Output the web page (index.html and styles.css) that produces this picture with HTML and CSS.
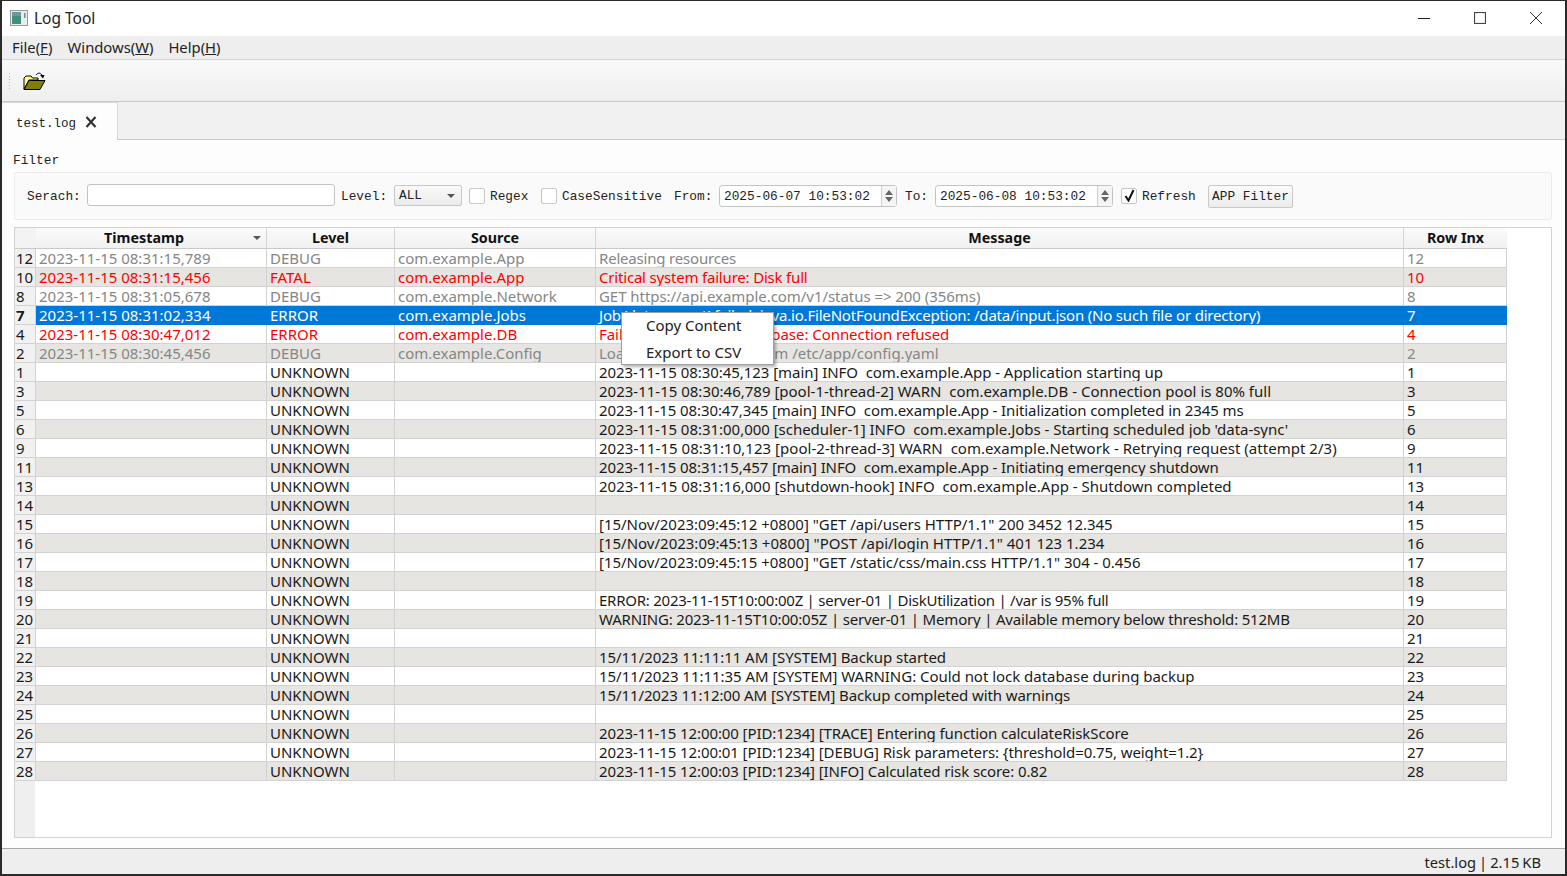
FILE: index.html
```html
<!DOCTYPE html>
<html lang="en">
<head>
<meta charset="utf-8">
<title>Log Tool</title>
<link rel="stylesheet" href="styles.css">
</head>
<body>
<div class="window">
  <header class="titlebar">
    <svg class="app-icon" width="18" height="16" viewBox="0 0 18 16"><rect x="0.5" y="0.5" width="17" height="15" fill="#e8ecec" stroke="#9a9a9a"/><rect x="2" y="2" width="9" height="12" fill="#3f8f80"/><rect x="2" y="2" width="9" height="4" fill="#6a9a9a"/><rect x="14" y="3" width="1.5" height="5" fill="#7a8a90"/></svg>
    <span class="title">Log Tool</span>
    <div class="winbtns">
      <svg width="12" height="12" viewBox="0 0 12 12"><path d="M0 6.500H12" stroke="#222" fill="none"/></svg>
      <svg width="12" height="12" viewBox="0 0 12 12"><rect x="0.500" y="0.500" width="11" height="11" stroke="#444" stroke-width="1.200" fill="none"/></svg>
      <svg width="12" height="12" viewBox="0 0 12 12"><path d="M0 0L12 12M12 0L0 12" stroke="#333" fill="none"/></svg>
    </div>
  </header>
  <nav class="menubar">
    <span>File(<u>F</u>)</span><span>Windows(<u>W</u>)</span><span>Help(<u>H</u>)</span>
  </nav>
  <div class="toolbar">
    <span class="grip"></span>
    <svg class="folder" width="23" height="19" viewBox="0 0 23 19">
      <path d="M1 17V6L3 4H8L9.500 6H15V8H6L1 17Z" fill="#ffff80" stroke="#000"/>
      <path d="M1 17.500L6 8.500H22L17 17.500Z" fill="#808000" stroke="#000"/>
      <path d="M13 3C15 0.500 17 0.500 19 3" fill="none" stroke="#000"/>
      <path d="M17 3H21.500L20 6.500Z" fill="#000"/>
    </svg>
  </div>
  <div class="tabbar">
    <div class="tab"><span>test.log</span>
      <svg width="12" height="12" viewBox="0 0 12 12"><path d="M1.500 1L10.500 11M10.500 1L1.500 11" stroke="#333" stroke-width="2.200" fill="none"/></svg>
    </div>
  </div>
  <main class="content">
    <div class="filter-label">Filter</div>
    <section class="filter">
      <label class="lbl w-serach">Serach:</label>
      <div class="input search"></div>
      <label class="lbl w-level">Level:</label>
      <div class="combo"><span>ALL</span><i class="caret"></i></div>
      <span class="check c-regex"></span><label class="lbl w-regex">Regex</label>
      <span class="check"></span><label class="lbl w-case">CaseSensitive</label>
      <label class="lbl w-from">From:</label>
      <div class="input date"><span>2025-06-07 10:53:02</span><div class="spin"><i class="up"></i><i class="down"></i></div></div>
      <label class="lbl w-to">To:</label>
      <div class="input date"><span>2025-06-08 10:53:02</span><div class="spin"><i class="up"></i><i class="down"></i></div></div>
      <span class="check checked"><svg width="11" height="13" viewBox="0 0 11 13"><path d="M1.500 7L4.500 11.500L9.500 1" fill="none" stroke="#111" stroke-width="2"/></svg></span><label class="lbl w-refresh">Refresh</label>
      <button class="apply">APP Filter</button>
    </section>
    <section class="table">
      <div class="thead">
        <div class="corner"></div>
        <div class="th sort">Timestamp<i class="caret"></i></div>
        <div class="th">Level</div>
        <div class="th">Source</div>
        <div class="th">Message</div>
        <div class="th">Row Inx</div>
      </div>
      <div class="tbody">
        <div class="row debug"><b>12</b><span>2023-11-15 08:31:15,789</span><span>DEBUG</span><span>com.example.App</span><span class="m1">Releasing resources</span><span>12</span></div>
        <div class="row alt error"><b>10</b><span>2023-11-15 08:31:15,456</span><span>FATAL</span><span>com.example.App</span><span class="m1">Critical system failure: Disk full</span><span>10</span></div>
        <div class="row debug"><b>8</b><span>2023-11-15 08:31:05,678</span><span>DEBUG</span><span>com.example.Network</span><span class="m3">GET https://api.example.com/v1/status =&gt; 200 (356ms)</span><span>8</span></div>
        <div class="row selected"><b>7</b><span>2023-11-15 08:31:02,334</span><span>ERROR</span><span>com.example.Jobs</span><span class="m1">Job 'data-export' failed: java.io.FileNotFoundException: /data/input.json (No such file or directory)</span><span>7</span></div>
        <div class="row error"><b>4</b><span>2023-11-15 08:30:47,012</span><span>ERROR</span><span>com.example.DB</span><span class="m3">Failed to connect to database: Connection refused</span><span>4</span></div>
        <div class="row alt debug"><b>2</b><span>2023-11-15 08:30:45,456</span><span>DEBUG</span><span>com.example.Config</span><span>Loaded configuration from /etc/app/config.yaml</span><span>2</span></div>
        <div class="row"><b>1</b><span></span><span>UNKNOWN</span><span></span><span class="m3">2023-11-15 08:30:45,123 [main] INFO&nbsp; com.example.App - Application starting up</span><span>1</span></div>
        <div class="row alt"><b>3</b><span></span><span>UNKNOWN</span><span></span><span>2023-11-15 08:30:46,789 [pool-1-thread-2] WARN&nbsp; com.example.DB - Connection pool is 80% full</span><span>3</span></div>
        <div class="row"><b>5</b><span></span><span>UNKNOWN</span><span></span><span class="m2">2023-11-15 08:30:47,345 [main] INFO&nbsp; com.example.App - Initialization completed in 2345 ms</span><span>5</span></div>
        <div class="row alt"><b>6</b><span></span><span>UNKNOWN</span><span></span><span class="m4">2023-11-15 08:31:00,000 [scheduler-1] INFO&nbsp; com.example.Jobs - Starting scheduled job 'data-sync'</span><span>6</span></div>
        <div class="row"><b>9</b><span></span><span>UNKNOWN</span><span></span><span class="p1">2023-11-15 08:31:10,123 [pool-2-thread-3] WARN&nbsp; com.example.Network - Retrying request (attempt 2/3)</span><span>9</span></div>
        <div class="row alt"><b>11</b><span></span><span>UNKNOWN</span><span></span><span class="m2">2023-11-15 08:31:15,457 [main] INFO&nbsp; com.example.App - Initiating emergency shutdown</span><span>11</span></div>
        <div class="row"><b>13</b><span></span><span>UNKNOWN</span><span></span><span>2023-11-15 08:31:16,000 [shutdown-hook] INFO&nbsp; com.example.App - Shutdown completed</span><span>13</span></div>
        <div class="row alt"><b>14</b><span></span><span>UNKNOWN</span><span></span><span></span><span>14</span></div>
        <div class="row"><b>15</b><span></span><span>UNKNOWN</span><span></span><span class="m4">[15/Nov/2023:09:45:12 +0800] "GET /api/users HTTP/1.1" 200 3452 12.345</span><span>15</span></div>
        <div class="row alt"><b>16</b><span></span><span>UNKNOWN</span><span></span><span>[15/Nov/2023:09:45:13 +0800] "POST /api/login HTTP/1.1" 401 123 1.234</span><span>16</span></div>
        <div class="row"><b>17</b><span></span><span>UNKNOWN</span><span></span><span class="m4">[15/Nov/2023:09:45:15 +0800] "GET /static/css/main.css HTTP/1.1" 304 - 0.456</span><span>17</span></div>
        <div class="row alt"><b>18</b><span></span><span>UNKNOWN</span><span></span><span></span><span>18</span></div>
        <div class="row"><b>19</b><span></span><span>UNKNOWN</span><span></span><span class="m5">ERROR: 2023-11-15T10:00:00Z | server-01 | DiskUtilization | /var is 95% full</span><span>19</span></div>
        <div class="row alt"><b>20</b><span></span><span>UNKNOWN</span><span></span><span class="m1">WARNING: 2023-11-15T10:00:05Z | server-01 | Memory | Available memory below threshold: 512MB</span><span>20</span></div>
        <div class="row"><b>21</b><span></span><span>UNKNOWN</span><span></span><span></span><span>21</span></div>
        <div class="row alt"><b>22</b><span></span><span>UNKNOWN</span><span></span><span class="m3">15/11/2023 11:11:11 AM [SYSTEM] Backup started</span><span>22</span></div>
        <div class="row"><b>23</b><span></span><span>UNKNOWN</span><span></span><span class="m4">15/11/2023 11:11:35 AM [SYSTEM] WARNING: Could not lock database during backup</span><span>23</span></div>
        <div class="row alt"><b>24</b><span></span><span>UNKNOWN</span><span></span><span class="m2">15/11/2023 11:12:00 AM [SYSTEM] Backup completed with warnings</span><span>24</span></div>
        <div class="row"><b>25</b><span></span><span>UNKNOWN</span><span></span><span></span><span>25</span></div>
        <div class="row alt"><b>26</b><span></span><span>UNKNOWN</span><span></span><span class="m2">2023-11-15 12:00:00 [PID:1234] [TRACE] Entering function calculateRiskScore</span><span>26</span></div>
        <div class="row"><b>27</b><span></span><span>UNKNOWN</span><span></span><span class="m2">2023-11-15 12:00:01 [PID:1234] [DEBUG] Risk parameters: {threshold=0.75, weight=1.2}</span><span>27</span></div>
        <div class="row alt"><b>28</b><span></span><span>UNKNOWN</span><span></span><span class="m2">2023-11-15 12:00:03 [PID:1234] [INFO] Calculated risk score: 0.82</span><span>28</span></div>
      </div>
    </section>
  </main>
  <footer class="statusbar"><span>test.log | 2.15 KB</span></footer>
  <div class="context-menu">
    <div>Copy Content</div>
    <div>Export to CSV</div>
  </div>
</div>
</body>
</html>
```

FILE: styles.css
```css
* { box-sizing: border-box; }
html, body { margin: 0; padding: 0; height: 100%; overflow: hidden; }
body { font-family: "Noto Sans", sans-serif; font-size: 15px; color: #1a1a1a; background: #fff; }
.window { position: relative; width: 1567px; height: 876px; display: flex; flex-direction: column; border: 1px solid #2a2a2a; border-bottom-width: 2px; border-left-width: 2px; border-right-width: 2px; background: #fdfdfd; }

.titlebar { height: 35px; flex: none; display: flex; align-items: center; background: #fff; padding-left: 8px; padding-bottom: 1px; }
.app-icon { flex: none; }
.title { margin-left: 6px; font-size: 15.500px; line-height: 20px; margin-top: -1px; color: #222; }
.winbtns { margin-left: auto; display: flex; gap: 44px; padding-right: 23px; align-items: center; }

.menubar { height: 24px; flex: none; background: #eeeeee; border-bottom: 1px solid #d4d4d4; display: flex; align-items: center; gap: 15px; padding-left: 10px; padding-bottom: 2px; font-size: 14.800px; color: #222; }

.toolbar { height: 42px; flex: none; display: flex; align-items: center; background: linear-gradient(#f9f9f9, #efefef); border-bottom: 1px solid #c8c8c8; }
.grip { width: 3px; height: 17px; margin-left: 6px; background-image: radial-gradient(#bbb 0.7px, transparent 0.8px); background-size: 3px 3px; }
.folder { margin-left: 12px; margin-top: 1px; }

.tabbar { height: 38px; flex: none; display: flex; align-items: flex-end; padding-top: 1px; background: #f1f1f1; border-bottom: 1px solid #c8c8c8; }
.tab { width: 116px; height: 38px; margin-bottom: -1px; background: #fdfdfd; border: 1px solid #d8d8d8; border-bottom: none; border-left: none; border-radius: 2px 2px 0 0; display: flex; align-items: center; padding-left: 14px; padding-top: 5px; gap: 9px; font: 12.500px "Liberation Mono", monospace; color: #222; }
.tab svg { flex: none; margin-top: -5px; }

.content { flex: 1; min-height: 0; display: flex; flex-direction: column; padding: 13px 13px 10px 12px; background: #fdfdfd; }
.filter-label { height: 19px; font: 12.800px/16px "Liberation Mono", monospace; color: #222; margin-left: -1px; }
.filter { height: 48px; flex: none; display: flex; align-items: center; background: #fafafa; border: 1px solid #ececec; border-radius: 2px; padding-left: 12px; font: 12.800px "Liberation Mono", monospace; color: #222; }
.lbl { flex: none; white-space: nowrap; }
.w-serach { width: 60px; }
.w-level { margin-left: 6px; width: 53px; }
.w-regex { margin-left: 5px; width: 51px; }
.w-case { margin-left: 5px; width: 112px; }
.w-from { width: 45px; }
.w-to { margin-left: 8px; width: 30px; }
.w-refresh { margin-left: 5px; width: 61px; }

.input { height: 22px; background: #fff; border: 1px solid #c4c4c4; border-radius: 3px; flex: none; }
.search { width: 248px; margin-bottom: 2px; }
.combo { width: 68px; height: 21px; flex: none; margin-bottom: 1px; border: 1px solid #c8c8c8; border-radius: 2px; background: linear-gradient(#fafafa, #ececec); display: flex; align-items: center; padding-left: 4px; position: relative; }
.caret { display: block; width: 0; height: 0; border: 4px solid transparent; border-top: 4px solid #555; border-bottom: 0; }
.combo .caret { margin-left: auto; margin-right: 6px; }
.check { flex: none; width: 16px; height: 16px; background: #fff; border: 1px solid #c8c8c8; border-radius: 2px; display: flex; align-items: center; justify-content: center; }
.c-regex { margin-left: 7px; }
.checked { margin-left: 8px; margin-bottom: 1px; }
.date { width: 178px; display: flex; align-items: center; padding-left: 4px; }
.date span { flex: 1; }
.spin { width: 15px; height: 20px; display: flex; flex-direction: column; align-items: center; justify-content: center; gap: 2px; background: #f5f5f5; border-left: 1px solid #d0d0d0; }
.spin i { display: block; width: 0; height: 0; border: 4px solid transparent; }
.up { border-bottom: 5px solid #666 !important; border-top: 0 !important; }
.down { border-top: 5px solid #666 !important; border-bottom: 0 !important; }
.apply { margin-left: 5px; width: 85px; height: 23px; padding: 0; border: 1px solid #c8c8c8; border-radius: 2px; background: linear-gradient(#fbfbfb, #ececec); font: 12.800px "Liberation Mono", monospace; color: #222; }

.table { margin-top: 7px; flex: 1; min-height: 0; background: #fff; border: 1px solid #d2d2d2; display: flex; flex-direction: column; position: relative; }
.thead { display: grid; grid-template-columns: 21px 231px 128px 201px 808px 103px; height: 21px; flex: none; background: linear-gradient(#fbfbfb, #f1f1f1); border-bottom: 1px solid #c9c9c9; width: 1492px; }
.corner { background: #f3f3f3; }
.th { display: flex; align-items: center; justify-content: center; font-weight: 700; font-size: 14.300px; color: #111; border-right: 1px solid #d4d4d4; position: relative; line-height: 20px; }
.th:last-child { border-right: none; }
.sort { padding-right: 14px; }
.sort .caret { position: absolute; right: 5px; top: 8px; }
.tbody { flex: 1; min-height: 0; background: linear-gradient(90deg, #efefef 20px, #fff 20px); }
.row { display: grid; grid-template-columns: 21px 231px 128px 201px 808px 103px; width: 1492px; height: 19px; }
.row b { font-weight: 400; background: #f1f1f1; border-right: 1px solid #d2d2d2; border-bottom: 1px solid #d2d2d2; line-height: 18px; text-align: left; color: #1a1a1a; padding-left: 1px; }
.row span { padding-left: 3px; line-height: 18px; white-space: nowrap; overflow: hidden; border-right: 1px solid #d2d2d2; border-bottom: 1px solid #d2d2d2; }
.row .m1 { letter-spacing: -0.190px; }
.row .m5 { letter-spacing: -0.250px; }
.row .m2 { letter-spacing: -0.100px; }
.row .m3 { letter-spacing: -0.050px; }
.row .m4 { letter-spacing: -0.030px; }
.row .p1 { letter-spacing: 0.030px; }
.alt span { background: #e6e5e1; }
.debug span { color: #868686; }
.error span { color: #ff0000; }
.selected span { background: #0078d7; color: #fff; border-color: #0078d7; }
.selected b { font-weight: 700; }

.statusbar { height: 26px; flex: none; background: #eeeeee; border-top: 1px solid #a8a8a8; display: flex; align-items: center; justify-content: flex-end; padding-right: 24px; font-size: 14.700px; word-spacing: -0.800px; color: #222; }

.context-menu { position: absolute; left: 619px; top: 311px; width: 153px; height: 53px; background: #fff; border: 1px solid #a0a0a0; box-shadow: 2px 2px 3px rgba(0,0,0,0.3); font-size: 15px; color: #222; }
.context-menu div { height: 25px; line-height: 24px; padding-left: 24px; }
.context-menu div + div { margin-top: 2px; }
```
